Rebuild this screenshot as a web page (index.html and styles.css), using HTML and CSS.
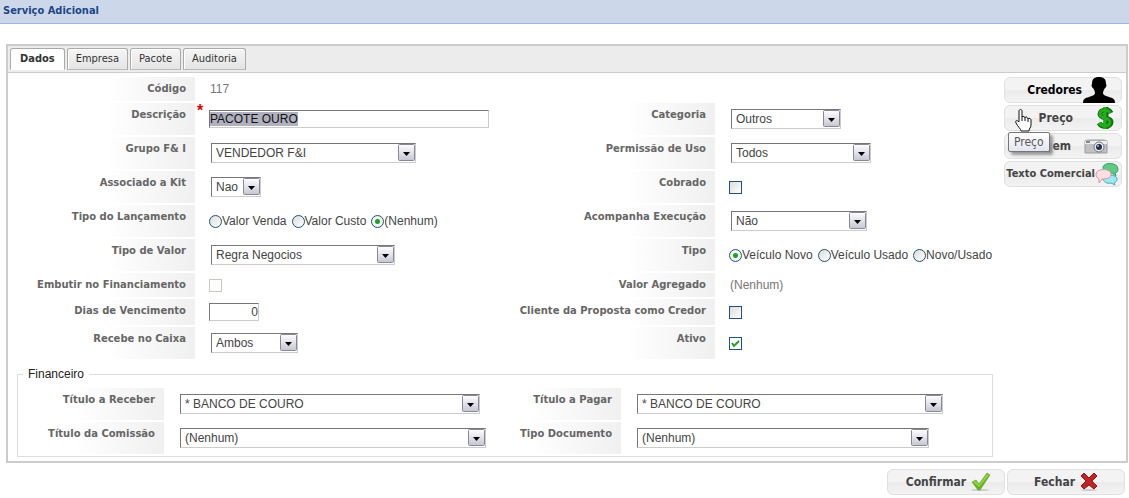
FILE: index.html
```html
<!DOCTYPE html>
<html lang="pt-BR">
<head>
<meta charset="utf-8">
<title>Serviço Adicional</title>
<link rel="stylesheet" href="styles.css">
</head>
<body>
<h1 class="title">Serviço Adicional</h1>
<main class="panel">
  <nav class="tabs">
    <button class="tab tab-active" type="button">Dados</button>
    <button class="tab" type="button">Empresa</button>
    <button class="tab" type="button">Pacote</button>
    <button class="tab" type="button">Auditoria</button>
  </nav>
  <div class="content">
    <form class="form" id="form">
      <div class="grid">
        <span class="label">Código</span><div class="value"><output class="text">117</output></div>
        <div class="blank"></div>

        <label class="label" for="descricao">Descrição</label><div class="value"><span class="required">*</span><input class="input input-long" id="descricao" type="text" value="PACOTE OURO"></div>
        <label class="label" for="categoria">Categoria</label><div class="value"><select class="select w110" id="categoria"><option>Outros</option></select></div>

        <label class="label" for="grupo">Grupo F&amp; I</label><div class="value"><select class="select w205" id="grupo"><option>VENDEDOR F&amp;I</option></select></div>
        <label class="label" for="permissao">Permissão de Uso</label><div class="value"><select class="select w140" id="permissao"><option>Todos</option></select></div>

        <label class="label" for="kit">Associado a Kit</label><div class="value"><select class="select w50" id="kit"><option>Nao</option></select></div>
        <label class="label" for="cobrado">Cobrado</label><div class="value"><input class="check" id="cobrado" type="checkbox"></div>

        <span class="label" id="lancamento">Tipo do Lançamento</span>
        <div class="value radios" role="radiogroup" aria-labelledby="lancamento">
          <label class="option"><input class="radio" type="radio" name="lanc">Valor Venda</label>
          <label class="option"><input class="radio" type="radio" name="lanc">Valor Custo</label>
          <label class="option"><input class="radio" type="radio" name="lanc" checked>(Nenhum)</label>
        </div>
        <label class="label" for="execucao">Acompanha Execução</label><div class="value"><select class="select w136" id="execucao"><option>Não</option></select></div>

        <label class="label" for="tipovalor">Tipo de Valor</label><div class="value"><select class="select w184" id="tipovalor"><option>Regra Negocios</option></select></div>
        <span class="label" id="tipo">Tipo</span>
        <div class="value radios" role="radiogroup" aria-labelledby="tipo">
          <label class="option"><input class="radio" type="radio" name="tipo" checked>Veículo Novo</label>
          <label class="option"><input class="radio" type="radio" name="tipo">Veículo Usado</label>
          <label class="option"><input class="radio" type="radio" name="tipo">Novo/Usado</label>
        </div>

        <label class="label" for="embutir">Embutir no Financiamento</label><div class="value"><input class="check" id="embutir" type="checkbox" disabled></div>
        <span class="label">Valor Agregado</span><div class="value"><output class="text">(Nenhum)</output></div>

        <label class="label" for="dias">Dias de Vencimento</label><div class="value"><input class="input input-short" id="dias" type="text" value="0"></div>
        <label class="label" for="cliente">Cliente da Proposta como Credor</label><div class="value"><input class="check" id="cliente" type="checkbox"></div>

        <label class="label" for="caixa">Recebe no Caixa</label><div class="value"><select class="select w87" id="caixa"><option>Ambos</option></select></div>
        <label class="label" for="ativo">Ativo</label><div class="value"><input class="check" id="ativo" type="checkbox" checked></div>
      </div>
      <fieldset class="finance">
        <legend class="legend">Financeiro</legend>
        <div class="finance-grid">
          <label class="label" for="receber">Título a Receber</label><div class="value"><select class="select w300" id="receber"><option>* BANCO DE COURO</option></select></div>
          <label class="label" for="pagar">Título a Pagar</label><div class="value"><select class="select w306" id="pagar"><option>* BANCO DE COURO</option></select></div>
          <label class="label" for="comissao">Título da Comissão</label><div class="value"><select class="select w306" id="comissao"><option>(Nenhum)</option></select></div>
          <label class="label" for="documento">Tipo Documento</label><div class="value"><select class="select w292" id="documento"><option>(Nenhum)</option></select></div>
        </div>
      </fieldset>
    </form>
    <aside class="side">
      <button class="button button-hot" type="button">Credores
        <svg class="icon-person" viewBox="0 0 34 26" aria-hidden="true"><path fill="#000" d="M1 26c0-4 2-5 6-6 3-1 6-2 6-4 0-2-1-3-2-5-1 0-2-3-1-4 0-5 2-7 7-7s7 2 7 7c1 1 0 4-1 4-1 2-2 3-2 5 0 2 3 3 6 4 4 1 6 2 6 6z"/></svg>
      </button>
      <button class="button" type="button">Preço
        <svg class="icon-dollar" viewBox="0 0 18 24" aria-hidden="true"><g fill="none" stroke="#156b12" stroke-width="5"><path d="M15 7C13 3 4 3 4 8s11 3 11 8-9 6-12 1M10 1v22"/></g><g fill="none" stroke="#22ad1b" stroke-width="3"><path d="M14 7C12 3 4 3 4 8s10 3 10 8-8 5-11 1M9 1v22"/></g></svg>
        <svg class="cursor" viewBox="0 0 18 23" aria-hidden="true"><path fill="#fff" stroke="#111" stroke-linejoin="round" d="M5 13V2c0-2 3-2 3 0v6c0-1 3-1 3 1 0-2 3-1 3 1 0-1 3-1 3 1v5c0 3-2 3-2 6H7c0-2-3-4-5-8-1-3 1-3 3-1zM8 8v4M11 9v3M14 10v3"/></svg>
      </button>
      <button class="button" type="button">Imagem
        <svg class="icon-camera" viewBox="0 0 24 16" aria-hidden="true"><path fill="#bfc1c4" stroke="#999b9f" d="M1 3c2-1 3-1 5-1h12c2 0 3 0 5 1v12H1z"/><path fill="#eceded" d="M1 3h22v3H1z"/><path fill="#85878b" d="M2 3h4v2H2z"/><circle cx="15" cy="9" r="5" fill="#e8eaec" stroke="#777"/><circle cx="15" cy="9" r="3" fill="#234"/><circle cx="14" cy="8" r="1" fill="#9bf"/></svg>
        <span class="tooltip" role="tooltip">Preço</span>
      </button>
      <button class="button button-small" type="button">Texto Comercial
        <svg class="icon-chat" viewBox="0 0 24 24" aria-hidden="true"><path fill="#5fc986" stroke="#35a565" d="M8 5c1-5 15-5 15 2 0 3-2 4-3 4l1 3-4-3C12 12 8 9 8 5z"/><path fill="#9ceaf0" stroke="#45adb7" d="M8 16c1-4 14-4 14 1 0 2-1 3-3 4l1 2-4-2c-4 1-8-1-8-5z"/><path fill="#fbdfe2" stroke="#d39aa6" d="M1 12c0-6 15-6 15 0 0 4-4 5-9 5l-3 4v-4c-2-1-3-3-3-5z"/></svg>
      </button>
    </aside>
  </div>
</main>
<footer class="actions">
  <button class="button" type="submit" form="form">Confirmar
    <svg class="icon-check" viewBox="0 0 20 20" aria-hidden="true"><ellipse cx="9" cy="18" rx="9" ry="1" fill="#ccc"/><path fill="#66b421" stroke="#509819" stroke-width=".5" d="M1 10l4-2 3 4 8-11 3 2-10 15H7z"/><path fill="#9ad33f" d="M2 10l3-1 3 4 8-11 2 1-10 12z"/></svg>
  </button>
  <button class="button" type="button">Fechar
    <svg class="icon-close" viewBox="0 0 18 20" aria-hidden="true"><ellipse cx="9" cy="18" rx="8" ry="1" fill="#ccc"/><path fill="#bd2525" stroke="#971818" stroke-linejoin="round" d="M1 4l3-3 5 5 5-5 3 3-5 5 5 5-3 3-5-4-5 4-3-3 5-5z"/></svg>
  </button>
</footer>
<script src="script.js"></script>
</body>
</html>
```
FILE: styles.css
```css
* { box-sizing: border-box; }
body {
  margin: 0;
  background: #fff;
  color: #444;
  font: 12px/16px "Liberation Sans", Arial, sans-serif;
}
button, input, select { font: inherit; color: inherit; }

.title {
  margin: 0 0 20px;
  height: 24px;
  padding: 3px;
  border-bottom: 1px solid #9db8dc;
  background: #ccd8e9;
  color: #1c4587;
  font: bold 11px/16px "DejaVu Sans Condensed", Tahoma, sans-serif;
}
.panel {
  margin: 0 1px 0 6px;
  border: 2px solid #ccc;
}
.tabs {
  display: flex;
  align-items: flex-end;
  gap: 2px;
  height: 27px;
  padding: 0 2px 2px;
  border-bottom: 1px solid #ccc;
  background: #ececec;
}
.tab {
  height: 22px;
  padding: 0 8px;
  border: 1px solid #aaa;
  border-bottom-color: #bbb;
  border-radius: 3px 3px 0 0;
  background: linear-gradient(#f5f5f5, #e4e4e4);
  box-shadow: inset 1px 1px #fff;
  color: #333;
  font: 11px/20px "DejaVu Sans Condensed", Tahoma, sans-serif;
}
.tab-active {
  padding: 0 9px;
  background: #fff;
  font-weight: bold;
  border-bottom-color: #fff;
}
.content {
  display: flex;
  align-items: flex-start;
  gap: 11px;
  padding: 4px 4px 4px 9px;
}
.form { flex: 1; min-width: 0; }
.grid {
  display: grid;
  grid-template-columns: 178px minmax(0, 320fr) 200px minmax(0, 278fr);
  grid-template-rows: 24px repeat(5, 32px) 24px 26px 32px;
  row-gap: 2px;
}
.blank { grid-column: span 2; }
.label {
  padding: 4px 9px 0 0;
  background: linear-gradient(to right, #fff, #f0f0f0) right / 90px 100% no-repeat;
  color: #666;
  font: bold 10px/16px "DejaVu Sans", Verdana, sans-serif;
  text-align: right;
  white-space: nowrap;
}
.value {
  display: flex;
  align-items: center;
  position: relative;
  padding-left: 14px;
}
.text { padding-left: 1px; color: #777; }
.required {
  position: absolute;
  left: 2px;
  top: 0;
  color: #e00000;
  font: bold 16px/16px "Liberation Sans", Arial, sans-serif;
}
.input {
  height: 18px;
  padding: 0;
  border: 1px solid #ccc;
  border-top-color: #777;
  border-left-color: #777;
  border-radius: 0;
  background: #fff;
  outline: 0;
}
.input::selection { background: #b0b0be; color: #111; }
.input-long { width: 280px; }
.input-short { width: 50px; text-align: right; }
.select {
  appearance: none;
  flex: none;
  height: 20px;
  margin-left: 2px;
  padding: 0 20px 0 4px;
  border: 1px solid #ccc;
  border-top-color: #777;
  border-left-color: #777;
  border-radius: 0;
  background: #fff url("data:image/svg+xml,%3Csvg xmlns='http://www.w3.org/2000/svg' width='17' height='18'%3E%3Cdefs%3E%3ClinearGradient id='g' x2='0' y2='1'%3E%3Cstop stop-color='%23fff'/%3E%3Cstop offset='1' stop-color='%23c6c6d4'/%3E%3C/linearGradient%3E%3C/defs%3E%3Crect x='.5' y='.5' width='16' height='16' rx='1' fill='url(%23g)' stroke='%2388889a'/%3E%3Cpath d='M5 8h7l-3.500 4z'/%3E%3C/svg%3E") right top no-repeat;
}
.w50 { width: 50px; }
.w87 { width: 87px; }
.w110 { width: 110px; }
.w136 { width: 136px; }
.w140 { width: 140px; }
.w184 { width: 184px; }
.w205 { width: 205px; }
.w300 { width: 300px; }
.w306 { width: 306px; }
.w292 { width: 292px; }
.check, .radio {
  appearance: none;
  flex: none;
  width: 13px;
  height: 13px;
  margin: 0;
  border: 1px solid #1c5180;
  background: linear-gradient(135deg, #dcdcd7, #fff);
}
.check:disabled { border-color: #cac8bb; background: #fff; }
.check:checked {
  background: #fff url("data:image/svg+xml,%3Csvg xmlns='http://www.w3.org/2000/svg' width='11' height='11'%3E%3Cpath d='M2 5l2 3 5-5' fill='none' stroke='%2321a121' stroke-width='2'/%3E%3C/svg%3E") center no-repeat;
}
.radio { border-radius: 50%; }
.radio:checked { background: radial-gradient(circle, #21a121 0 2px, #f4f4f2 3px); }
.radios { gap: 5px; }
.option {
  display: flex;
  align-items: center;
  white-space: nowrap;
}
.finance {
  margin: 7px 0 0;
  padding: 0 2px 2px;
  border: 1px solid #ddd;
  min-width: 0;
}
.legend {
  margin-left: 3px;
  padding: 0 5px;
  color: #222;
  line-height: 16px;
}
.finance-grid {
  display: grid;
  grid-template-columns: 144px minmax(0, 313fr) 144px minmax(0, 369fr);
  grid-auto-rows: 32px;
  row-gap: 2px;
  padding-top: 6px;
}
.side {
  display: flex;
  flex-direction: column;
  gap: 2px;
  width: 118px;
}
.button {
  display: flex;
  align-items: center;
  justify-content: flex-end;
  gap: 5px;
  position: relative;
  width: 118px;
  height: 26px;
  padding: 0 5px 0 0;
  border: 1px solid #e0e0e0;
  border-radius: 6px;
  background: linear-gradient(#f3f3f3 50%, #ebebeb 50%, #f3f3f3);
  color: #444;
  font: bold 12px/16px "DejaVu Sans Condensed", Tahoma, sans-serif;
  white-space: nowrap;
}
.button-hot { color: #000; gap: 0; }
.button-small { gap: 0; padding-right: 2px; font-size: 11px; }
.icon-person { width: 34px; height: 26px; }
.icon-dollar { width: 18px; height: 24px; margin: 0 2px 0 18px; }
.icon-camera { width: 24px; height: 16px; margin: 0 8px; }
.icon-chat { width: 24px; height: 24px; }
.icon-check { width: 20px; height: 20px; margin-right: 8px; }
.icon-close { width: 18px; height: 20px; margin-right: 21px; }
.cursor {
  position: absolute;
  left: 9px;
  top: 3px;
  width: 18px;
  height: 23px;
}
.tooltip {
  position: absolute;
  left: 3px;
  top: -2px;
  padding: 1px 5px;
  border: 1px solid #767676;
  border-radius: 2px;
  background: linear-gradient(#fff, #e4e5f0);
  box-shadow: 3px 3px 3px #999;
  color: #575757;
  font-size: 12px;
  font-weight: normal;
}
.actions {
  display: flex;
  justify-content: flex-end;
  gap: 2px;
  padding: 6px 4px 2px 0;
}
```
FILE: script.js
```js
const description = document.getElementById("descricao");
description.focus();
description.select();
```
